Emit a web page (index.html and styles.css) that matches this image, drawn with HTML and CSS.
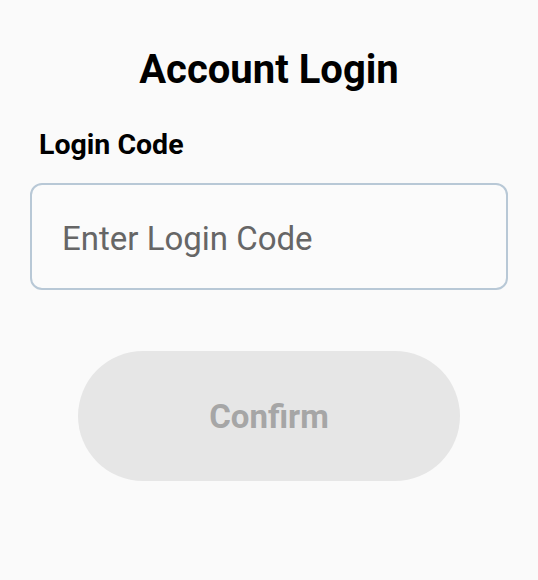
FILE: index.html
```html
<!DOCTYPE html>
<html lang="en">
<head>
<meta charset="utf-8">
<title>Account Login</title>
<link rel="stylesheet" href="styles.css">
</head>
<body>
<main class="page">
  <h1 class="title">Account Login</h1>
  <label class="label">Login Code</label>
  <div class="field"><span class="placeholder">Enter Login Code</span></div>
  <div class="actions">
    <button class="confirm" type="button" disabled>Confirm</button>
  </div>
</main>
</body>
</html>
```

FILE: styles.css
```css
html, body {
  margin: 0;
  padding: 0;
  background: #fafafa;
}
body {
  font-family: Roboto, "Noto Sans", sans-serif;
  color: #000;
}
.page {
  display: flex;
  flex-direction: column;
  padding: 46px 30px 0 30px;
}
.title {
  margin: 0;
  font-size: 40px;
  line-height: 47px;
  font-weight: 700;
  text-align: center;
}
.label {
  margin: 35px 0 0 9px;
  font-size: 28.5px;
  line-height: 34px;
  font-weight: 700;
}
.field {
  margin-top: 21px;
  height: 107px;
  box-sizing: border-box;
  border: 2px solid #b8c8d6;
  border-radius: 12px;
  background: #fbfbfb;
  display: flex;
  align-items: center;
  padding: 4px 30px 0 30px;
}
.placeholder {
  font-size: 33px;
  line-height: 38px;
  color: #666666;
}
.actions {
  display: flex;
  justify-content: center;
  margin-top: 61px;
}
.confirm {
  width: 382px;
  height: 130px;
  border: none;
  border-radius: 65px;
  background: #e6e6e6;
  color: #a6a6a6;
  font-family: Roboto, "Noto Sans", sans-serif;
  font-size: 33px;
  font-weight: 700;
  padding: 0;
}
```
